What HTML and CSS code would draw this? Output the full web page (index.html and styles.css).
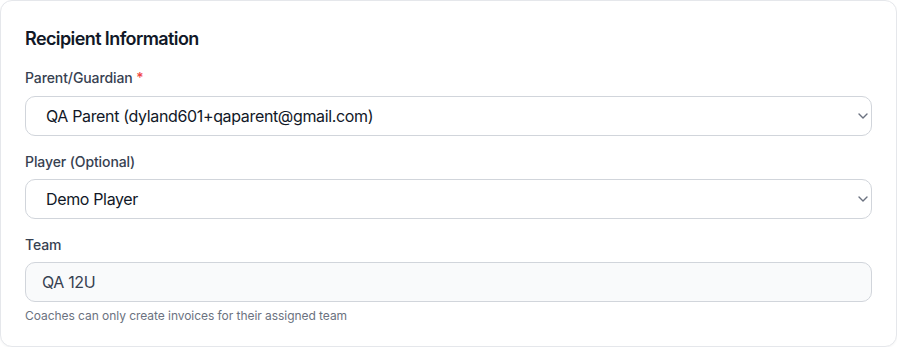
FILE: index.html
```html
<!DOCTYPE html>
<html lang="en">
<head>
<meta charset="utf-8">
<title>Recipient Information</title>
<link rel="stylesheet" href="styles.css">
</head>
<body>
<section class="card">
  <h2 class="card-title">Recipient Information</h2>
  <div class="field field-first">
    <label class="label" for="parent">Parent/Guardian <span class="req">*</span></label>
    <div class="select-wrap">
      <select id="parent" class="control select">
        <option>QA Parent (dyland601+qaparent@gmail.com)</option>
      </select>
      <svg class="chevron" width="10" height="6" viewBox="0 0 10 6" aria-hidden="true"><path d="M1 1l4 4 4-4" fill="none" stroke="#6b7280" stroke-width="1.4" stroke-linecap="round" stroke-linejoin="round"/></svg>
    </div>
  </div>
  <div class="field">
    <label class="label" for="player">Player (Optional)</label>
    <div class="select-wrap">
      <select id="player" class="control select">
        <option>Demo Player</option>
      </select>
      <svg class="chevron" width="10" height="6" viewBox="0 0 10 6" aria-hidden="true"><path d="M1 1l4 4 4-4" fill="none" stroke="#6b7280" stroke-width="1.4" stroke-linecap="round" stroke-linejoin="round"/></svg>
    </div>
  </div>
  <div class="field">
    <label class="label" for="team">Team</label>
    <input id="team" class="control input-disabled" type="text" value="QA 12U" disabled>
    <p class="help">Coaches can only create invoices for their assigned team</p>
  </div>
</section>
</body>
</html>
```

FILE: styles.css
```css
* { box-sizing: border-box; }
html, body { margin: 0; padding: 0; background: #ffffff; }
body {
  font-family: Inter, "Noto Sans", "Liberation Sans", sans-serif;
  color: #111827;
}
.card {
  width: 897px;
  height: 347px;
  border: 1px solid #e5e7eb;
  border-radius: 12px;
  background: #ffffff;
  padding: 24px;
  box-shadow: 0 1px 2px rgba(0,0,0,0.04);
}
.card-title {
  margin: 0;
  font-size: 18px;
  line-height: 28px;
  font-weight: 600;
  letter-spacing: -0.6px;
  color: #111827;
}
.field { margin-top: 16px; }
.field-first { margin-top: 15px; }
.label {
  display: block;
  font-size: 14px;
  line-height: 20px;
  font-weight: 500;
  letter-spacing: -0.1px;
  color: #374151;
  margin-bottom: 7px;
}
.field-first .label { margin-bottom: 8px; }
.req { color: #ef4444; }
.select-wrap { position: relative; }
.control {
  display: block;
  width: 100%;
  height: 40px;
  border: 1px solid #d1d5db;
  border-radius: 10px;
  background: #ffffff;
  font-family: inherit;
  font-size: 16px;
  letter-spacing: -0.35px;
  color: #111827;
  padding: 0 16px;
  margin: 0;
  outline: none;
}
.select {
  appearance: none;
  -webkit-appearance: none;
  padding-left: 20px;
}
.chevron {
  position: absolute;
  right: 4px;
  top: 17px;
}
.input-disabled {
  background: #f9fafb;
  color: #374151;
  -webkit-text-fill-color: #374151;
  opacity: 1;
}
.help {
  margin: 6px 0 0;
  font-size: 12px;
  line-height: 16px;
  letter-spacing: -0.05px;
  color: #6b7280;
}
```
